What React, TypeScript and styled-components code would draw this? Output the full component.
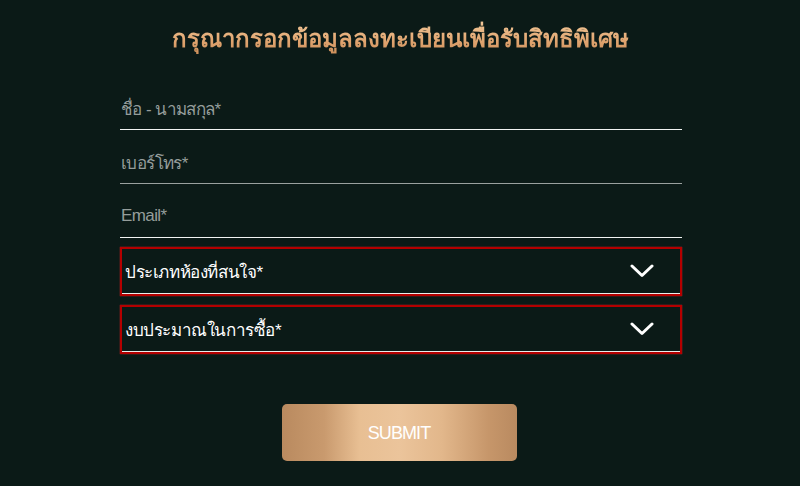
import styled, { createGlobalStyle } from 'styled-components';

const GlobalStyle = createGlobalStyle`
  html, body {
    margin: 0;
    padding: 0;
    background: #0b1a17;
  }
  body {
    font-family: 'Liberation Sans', 'Noto Sans', 'DejaVu Sans', sans-serif;
  }
`;

const Page = styled.div`
  width: 800px;
  height: 486px;
  background: #0b1a17;
  display: flex;
  flex-direction: column;
  align-items: center;
  box-sizing: border-box;
  padding-top: 21px;
`;

const Title = styled.h1`
  margin: 0;
  font-size: 24px;
  font-weight: 700;
  line-height: 36px;
  background: linear-gradient(180deg, #f3c99a 0%, #e0a570 55%, #c98a55 100%);
  -webkit-background-clip: text;
  background-clip: text;
  color: transparent;
`;

const Form = styled.form`
  width: 562px;
  margin-top: 28px;
  margin-left: 2px;
  display: flex;
  flex-direction: column;
  gap: 9px;
`;

const Field = styled.div<{ $line: string }>`
  height: 45px;
  box-sizing: border-box;
  border-bottom: 1px solid ${({ $line }) => $line};
  display: flex;
  align-items: center;
  padding-left: 1px;
  padding-top: 2px;
  font-size: 17px;
  letter-spacing: -0.6px;
  color: #959d9b;
`;

const SelectBox = styled.div`
  height: 49px;
  box-sizing: border-box;
  border: 2px solid #b40000;
  box-shadow: 0 0 1px #ff2a2a;
  display: flex;
  align-items: stretch;
`;

const SelectInner = styled.div`
  flex: 1;
  display: flex;
  align-items: center;
  justify-content: space-between;
  border-bottom: 1px solid #e8eeec;
  padding: 0 26px 0 3px;
  font-size: 17px;
  letter-spacing: -0.4px;
  color: #ffffff;
`;

const Chevron = () => (
  <svg width="24" height="14" viewBox="0 0 24 14" fill="none">
    <path d="M2 2 L12 11.5 L22 2" stroke="#ffffff" strokeWidth="3" strokeLinecap="round" strokeLinejoin="round" />
  </svg>
);

const SubmitButton = styled.button`
  align-self: center;
  margin-top: 41px;
  margin-left: -4px;
  width: 235px;
  height: 57px;
  border: none;
  border-radius: 5px;
  background: linear-gradient(
    90deg,
    #b98a5f 0%,
    #c99a6e 18%,
    #e8bf93 33%,
    #ebc49b 50%,
    #e2b78b 68%,
    #c6966a 88%,
    #b98a60 100%
  );
  color: #ffffff;
  font-family: 'Liberation Sans', Arial, sans-serif;
  font-size: 18px;
  letter-spacing: -0.9px;
  padding-top: 3px;
  cursor: pointer;
`;

const FIELDS = [
  { label: 'ชื่อ - นามสกุล*', line: '#f2f4f3' },
  { label: 'เบอร์โทร*', line: '#9aa19f' },
  { label: 'Email*', line: '#f2f4f3' },
];

const SELECTS = ['ประเภทห้องที่สนใจ*', 'งบประมาณในการซื้อ*'];

export default function App() {
  return (
    <>
      <GlobalStyle />
      <Page>
        <Title>กรุณากรอกข้อมูลลงทะเบียนเพื่อรับสิทธิพิเศษ</Title>
        <Form onSubmit={(e) => e.preventDefault()}>
          {FIELDS.map((f) => (
            <Field key={f.label} $line={f.line}>
              {f.label}
            </Field>
          ))}
          {SELECTS.map((s) => (
            <SelectBox key={s}>
              <SelectInner>
                <span>{s}</span>
                <Chevron />
              </SelectInner>
            </SelectBox>
          ))}
          <SubmitButton type="submit">SUBMIT</SubmitButton>
        </Form>
      </Page>
    </>
  );
}
